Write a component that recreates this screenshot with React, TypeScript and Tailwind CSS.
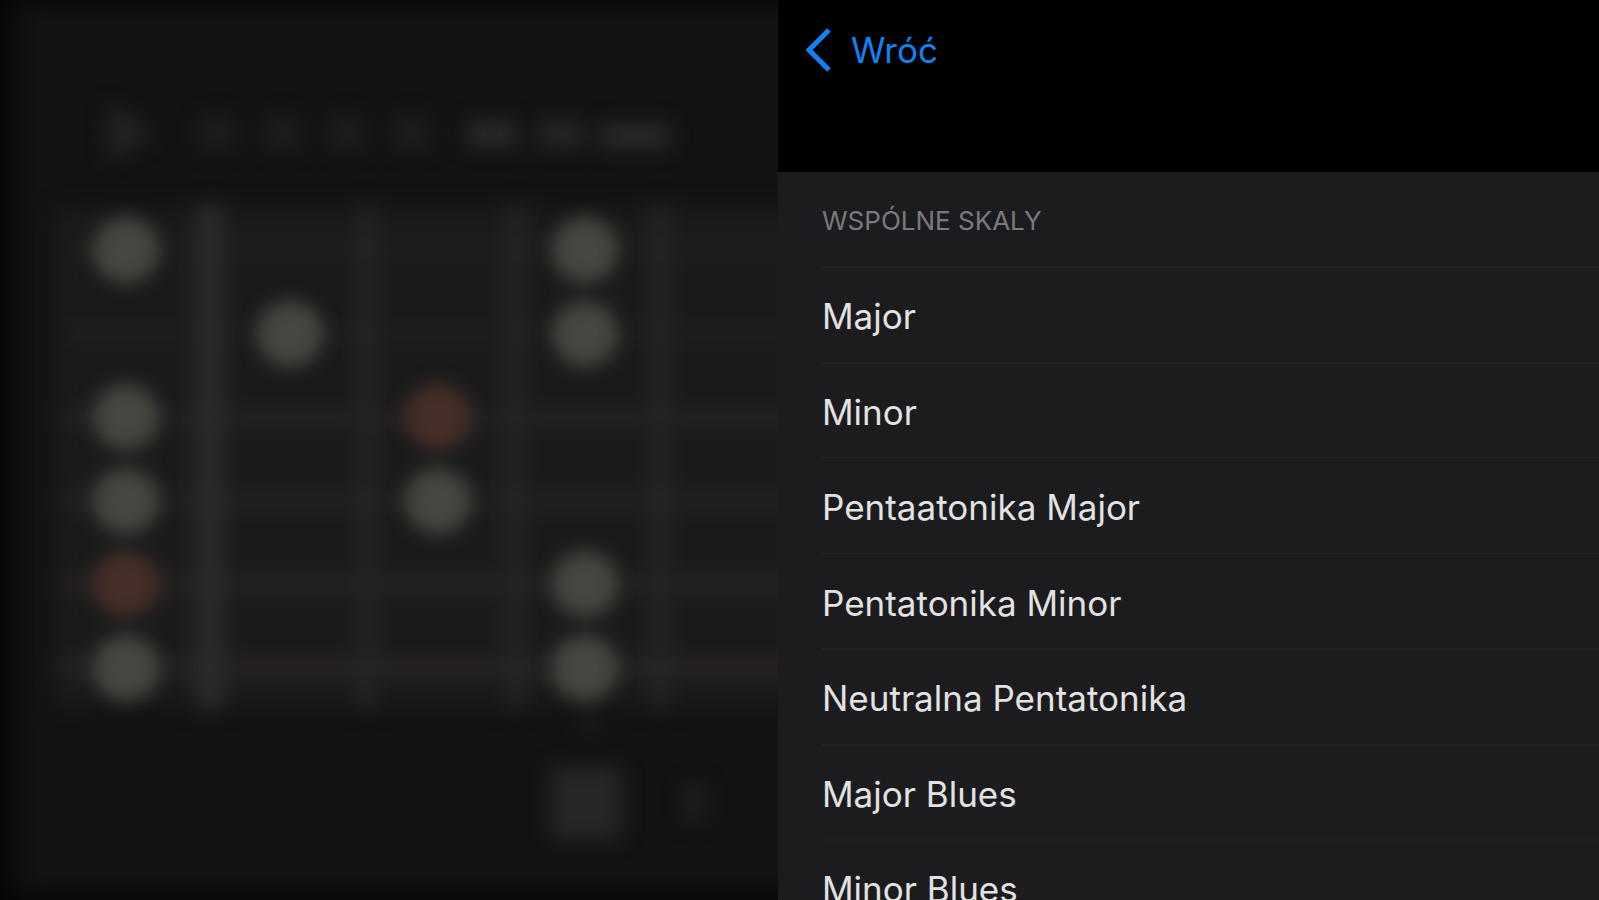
const strings = [
  { y: 249, w: 12, color: "#1f1f1f" },
  { y: 333, w: 12, color: "#1f1f1f" },
  { y: 418, w: 14, color: "#262223" },
  { y: 501, w: 14, color: "#252323" },
  { y: 584, w: 14, color: "#282324" },
  { y: 667, w: 16, color: "#2a2425" },
];

const frets = [367, 515, 660];

const notes = [
  { x: 126, y: 250 },
  { x: 585, y: 250 },
  { x: 290, y: 334 },
  { x: 585, y: 334 },
  { x: 126, y: 417 },
  { x: 438, y: 417, root: true },
  { x: 126, y: 501 },
  { x: 438, y: 501 },
  { x: 126, y: 584, root: true },
  { x: 585, y: 584 },
  { x: 126, y: 668 },
  { x: 585, y: 668 },
];

const scales = [
  "Major",
  "Minor",
  "Pentaatonika Major",
  "Pentatonika Minor",
  "Neutralna Pentatonika",
  "Major Blues",
  "Minor Blues",
];

function Blur({ id, amount }: { id: string; amount: number }) {
  return (
    <filter
      id={id}
      filterUnits="userSpaceOnUse"
      x="-60"
      y="-60"
      width="1000"
      height="1020"
      colorInterpolationFilters="sRGB"
    >
      <feGaussianBlur stdDeviation={amount} />
    </filter>
  );
}

function Fretboard() {
  return (
    <svg
      viewBox="0 0 778 900"
      preserveAspectRatio="xMinYMin slice"
      className="block h-full w-full"
      aria-hidden="true"
    >
      <defs>
        <Blur id="soft" amount={10} />
        <Blur id="dot" amount={9} />
        <Blur id="edge" amount={14} />
      </defs>
      <rect width="778" height="900" fill="#040404" />
      <rect x="10" y="0" width="900" height="896" fill="#131313" filter="url(#edge)" />
      <g filter="url(#soft)">
        <rect x="55" y="208" width="850" height="498" fill="#1b1b1c" />
        {strings.map((s) => (
          <rect key={s.y} x="55" y={s.y - s.w / 2} width="850" height={s.w} fill={s.color} />
        ))}
        {frets.map((x) => (
          <rect key={x} x={x - 8} y="204" width="16" height="506" fill="#262626" />
        ))}
        <rect x="196" y="204" width="28" height="506" fill="#2d2a2b" />
        <path d="M108 104 L156 133 L108 162 Z" fill="#242424" />
        {[217, 282, 346, 411].map((x) => (
          <rect key={x} x={x - 18} y="117" width="36" height="33" rx="5" fill="#1e1e21" />
        ))}
        <rect x="467" y="121" width="50" height="26" fill="#2a2a2a" />
        <rect x="538" y="121" width="46" height="26" fill="#272727" />
        <rect x="598" y="124" width="72" height="24" fill="#2a2a2a" />
        <rect x="582" y="700" width="14" height="34" fill="#1c1c1c" />
        <rect x="550" y="767" width="72" height="72" rx="6" fill="#272729" />
        <rect x="685" y="784" width="20" height="38" fill="#202020" />
      </g>
      <g filter="url(#dot)">
        {notes.map((n) => (
          <circle key={`${n.x}-${n.y}`} cx={n.x} cy={n.y} r="33" fill={n.root ? "#462f28" : "#474640"} />
        ))}
      </g>
    </svg>
  );
}

export default function App() {
  return (
    <main className="grid h-screen grid-cols-[778fr_821fr] overflow-hidden bg-black font-['Inter','Liberation_Sans',sans-serif]">
      <div className="min-h-0 overflow-hidden">
        <Fretboard />
      </div>
      <section className="flex min-h-0 flex-col overflow-hidden bg-[#1c1c1e]">
        <header className="flex h-[172px] shrink-0 items-start bg-black px-7 pt-6">
          <button type="button" className="flex items-center gap-5 text-[35px] leading-[52px] text-[#0f83f5]">
            <svg viewBox="0 0 25 44" className="h-11 w-[25px]" fill="none" aria-hidden="true">
              <path d="M23 2 L3 22 L23 42" stroke="currentColor" strokeWidth="5" />
            </svg>
            Wróć
          </button>
        </header>
        <h2 className="h-[94px] shrink-0 pl-11 text-[26px] leading-[98px] text-[#7a7a7c]">WSPÓLNE SKALY</h2>
        <ul className="pl-11">
          {scales.map((name) => (
            <li key={name} className="border-t-2 border-[#222224] odd:h-24 even:h-[95px]">
              <button type="button" className="block h-full w-full text-left text-[35px] leading-[96px] text-[#e2e2e3]">
                {name}
              </button>
            </li>
          ))}
        </ul>
      </section>
    </main>
  );
}
